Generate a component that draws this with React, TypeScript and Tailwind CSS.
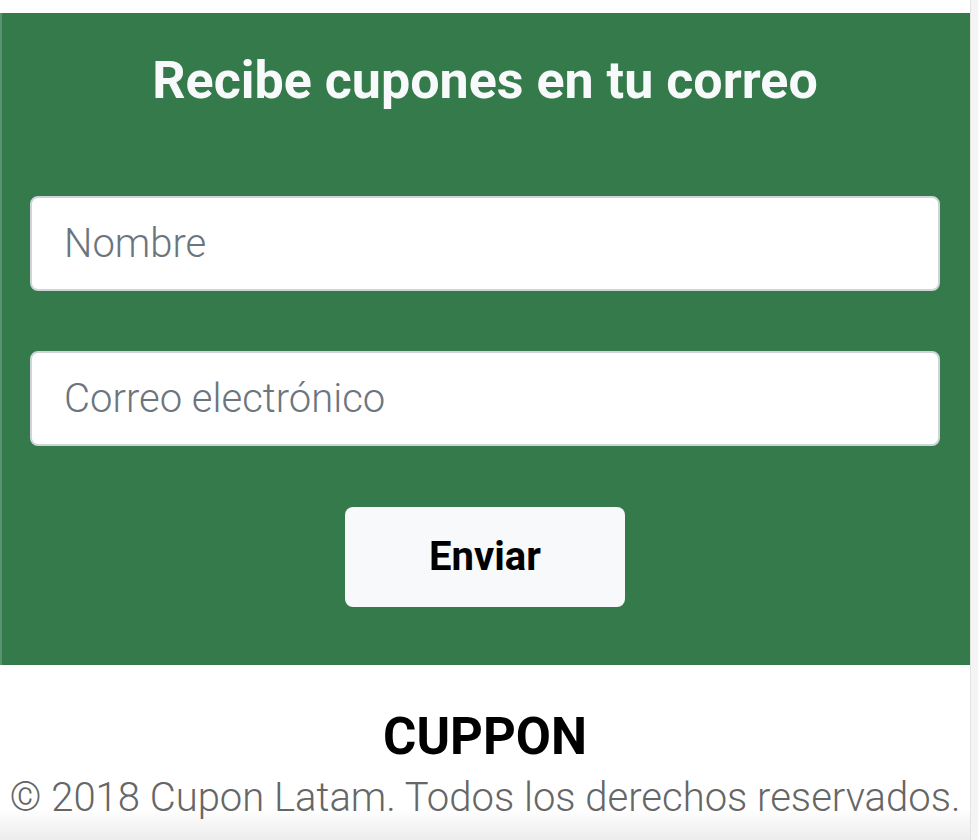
export default function App() {
  return (
    <div className="flex h-[840px] w-[978px] overflow-hidden bg-white" style={{ fontFamily: 'Roboto, "Liberation Sans", sans-serif' }}>
      <div className="flex w-[970px] flex-col">
        <div className="h-[13px] bg-white" />
        {/* newsletter */}
        <section className="flex h-[652px] flex-col border-l-2 border-[#5a9370] bg-[#347a4a] pl-[28px] pr-[30px] pt-[38px]">
          <h2 className="text-center text-[52px] font-bold leading-[60px] text-[#f8f9fa]">Recibe cupones en tu correo</h2>
          <form className="mt-[85px] flex flex-col gap-[60px]">
            <input
              type="text"
              placeholder="Nombre"
              className="h-[95px] w-full rounded-lg border-2 border-[#ced4da] bg-white px-[32px] text-[40px] font-light text-[#495057] placeholder:text-[#6c757d] outline-none"
            />
            <input
              type="email"
              placeholder="Correo electrónico"
              className="h-[95px] w-full rounded-lg border-2 border-[#ced4da] bg-white px-[32px] text-[40px] font-light text-[#495057] placeholder:text-[#6c757d] outline-none"
            />
          </form>
          <div className="mt-[61px] flex justify-center">
            <button type="button" className="h-[100px] w-[280px] rounded-lg bg-[#f8f9fa] text-[40px] font-bold text-black">
              Enviar
            </button>
          </div>
        </section>
        {/* footer */}
        <footer className="flex flex-1 flex-col items-center bg-gradient-to-b from-white from-[82%] to-[#ececec] pt-[44px]">
          <p className="text-[51px] font-bold leading-[56px] text-black">CUPPON</p>
          <p className="mt-[9px] whitespace-nowrap text-[40px] font-light leading-[48px] text-[#666666]">© 2018 Cupon Latam. Todos los derechos reservados.</p>
        </footer>
      </div>
      <div className="w-2 border-l border-[#e3e3e3] bg-[#f4f4f4]" />
    </div>
  )
}
